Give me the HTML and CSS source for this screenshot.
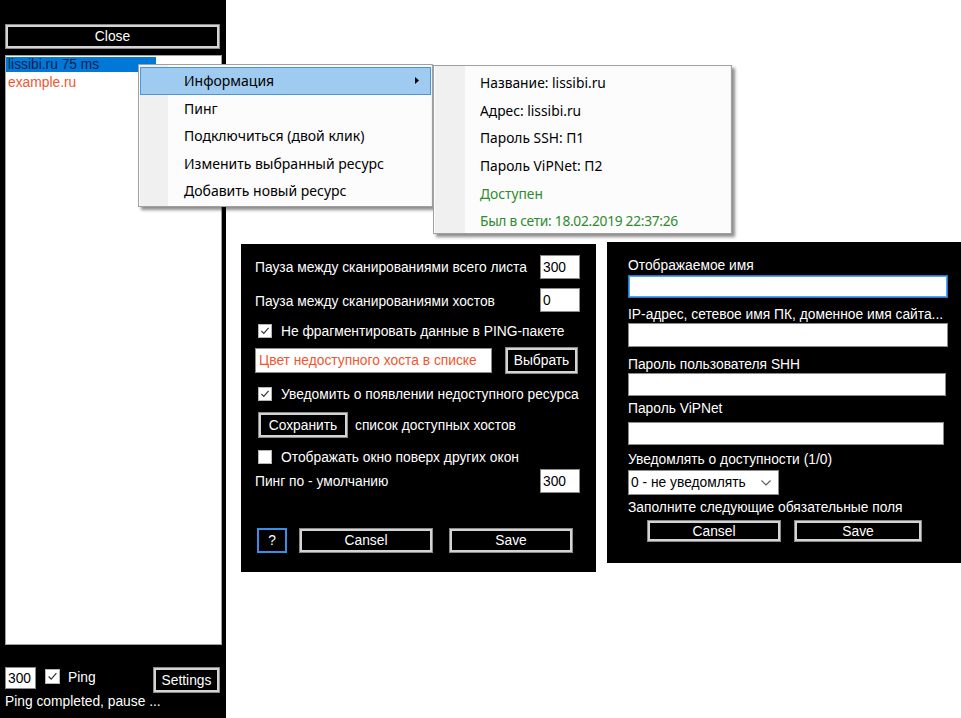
FILE: index.html
```html
<!DOCTYPE html>
<html lang="ru">
<head>
<meta charset="utf-8">
<title>Ping monitor</title>
<link rel="stylesheet" href="styles.css">
</head>
<body>
<aside class="win main-win">
  <div class="btn btn-close">Close</div>
  <div class="listbox">
    <div class="li"><span class="li-hl">lissibi.ru 75 ms</span></div>
    <div class="li li-down">example.ru</div>
  </div>
  <div class="main-bottom">
    <div class="field field-num">300</div>
    <span class="check checked"><svg viewBox="0 0 15 15"><polyline points="3,7.5 6,10.5 12,3.5"/></svg></span>
    <span class="ping-label">Ping</span>
    <div class="btn btn-settings">Settings</div>
  </div>
  <div class="status">Ping completed, pause ...</div>
</aside>

<section class="win settings">
  <div class="srow srow-1">
    <span>Пауза между сканированиями всего листа</span>
    <div class="field field-small">300</div>
  </div>
  <div class="srow srow-2">
    <span class="lbl-low">Пауза между сканированиями хостов</span>
    <div class="field field-small">0</div>
  </div>
  <div class="srow srow-3 srow-check">
    <span class="check checked"><svg viewBox="0 0 15 15"><polyline points="3,7.5 6,10.5 12,3.5"/></svg></span>
    <span>Не фрагментировать данные в PING-пакете</span>
  </div>
  <div class="srow srow-4">
    <div class="field field-color">Цвет недоступного хоста в списке</div>
    <div class="btn btn-pick">Выбрать</div>
  </div>
  <div class="srow srow-5 srow-check">
    <span class="check checked"><svg viewBox="0 0 15 15"><polyline points="3,7.5 6,10.5 12,3.5"/></svg></span>
    <span>Уведомить о появлении недоступного ресурса</span>
  </div>
  <div class="srow srow-6 srow-save">
    <div class="btn btn-save-list">Сохранить</div>
    <span>список доступных хостов</span>
  </div>
  <div class="srow srow-7 srow-check">
    <span class="check"></span>
    <span>Отображать окно поверх других окон</span>
  </div>
  <div class="srow srow-8">
    <span>Пинг по - умолчанию</span>
    <div class="field field-small">300</div>
  </div>
  <div class="srow srow-9">
    <div class="btn btn-help">?</div>
    <div class="btn btn-cancel">Cansel</div>
    <div class="btn btn-ok">Save</div>
  </div>
</section>

<section class="win form">
  <div class="flabel">Отображаемое имя</div>
  <div class="finput finput-focus f1"></div>
  <div class="flabel fl2">IP-адрес, сетевое имя ПК, доменное имя сайта...</div>
  <div class="finput f2"></div>
  <div class="flabel fl3">Пароль пользователя SHH</div>
  <div class="finput f3"></div>
  <div class="flabel fl4">Пароль ViPNet</div>
  <div class="finput f4"></div>
  <div class="flabel fl5">Уведомлять о доступности (1/0)</div>
  <div class="select">
    <span>0 - не уведомлять</span>
    <svg class="chev" viewBox="0 0 10 6"><polyline points="0.5,0.5 5,5 9.5,0.5"/></svg>
  </div>
  <div class="flabel fl6">Заполните следующие обязательные поля</div>
  <div class="form-buttons">
    <div class="btn btn-f-cancel">Cansel</div>
    <div class="btn btn-f-save">Save</div>
  </div>
</section>

<nav class="menu ctx">
  <div class="mi mi-active">Информация<svg class="arrow" viewBox="0 0 4 7"><polygon points="0,0 4,3.5 0,7"/></svg></div>
  <div class="mi">Пинг</div>
  <div class="mi">Подключиться (двой клик)</div>
  <div class="mi">Изменить выбранный ресурс</div>
  <div class="mi">Добавить новый ресурс</div>
</nav>

<nav class="menu sub">
  <div class="mi">Название: lissibi.ru</div>
  <div class="mi">Адрес: lissibi.ru</div>
  <div class="mi">Пароль SSH: П1</div>
  <div class="mi">Пароль ViPNet: П2</div>
  <div class="mi mi-ok">Доступен</div>
  <div class="mi mi-ok">Был в сети: 18.02.2019 22:37:26</div>
</nav>
</body>
</html>
```

FILE: styles.css
```css
* { box-sizing: border-box; }
html, body { margin: 0; padding: 0; }
body {
  width: 961px;
  height: 718px;
  background: #fff;
  overflow: hidden;
  position: relative;
  font-family: "Liberation Sans", Arial, sans-serif;
  font-size: 13.8px;
  color: #fff;
}

.win { position: absolute; background: #000; }

/* generic controls */
.btn {
  background: #000;
  color: #fff;
  border: 1px solid #8a8a8a;
  box-shadow: inset 0 0 0 2px #d4d4d4;
  display: flex;
  align-items: center;
  justify-content: center;
  flex: none;
}
.field {
  background: #fff;
  color: #000;
  border: 1px solid #8c8c8c;
  display: flex;
  align-items: center;
  padding-left: 2px;
  flex: none;
}
.check {
  width: 14px;
  height: 14px;
  background: #fff;
  border: 1px solid #b5b5b5;
  display: inline-flex;
  flex: none;
}
.check svg { width: 100%; height: 100%; }
.check polyline { fill: none; stroke: #333; stroke-width: 1.4; }

/* main window */
.main-win {
  left: 0; top: 0;
  width: 226px; height: 718px;
  display: flex;
  flex-direction: column;
  padding: 24px 6px 0 5px;
}
.btn-close { width: 215px; height: 25px; }
.listbox {
  margin-top: 6px;
  width: 217px;
  height: 590px;
  background: #fff;
  border: 1px solid #a0a0a0;
  padding-top: 1px;
  flex: none;
}
.li { height: 18px; line-height: 15px; padding-left: 0; }
.li-hl {
  display: inline-block;
  width: 150px;
  height: 15px;
  background: #0078d7;
  color: #0a1f4d;
  padding-left: 2px;
}
.li-down { color: #f2552e; padding-left: 2px; }
.main-bottom {
  margin-top: 22px;
  height: 26px;
  display: flex;
  align-items: flex-start;
}
.field-num { width: 31px; height: 22px; }
.main-bottom .check { margin: 2px 0 0 9px; width: 15px; height: 15px; }
.ping-label { margin: 3px 0 0 8px; line-height: 15px; }
.btn-settings { margin-left: auto; width: 67px; height: 26px; }
.status { margin-top: 1px; line-height: 16px; }

/* settings dialog */
.settings {
  left: 241px; top: 244px;
  width: 355px; height: 328px;
  padding: 11px 16px 0 14px;
  display: flex;
  flex-direction: column;
}
.srow { display: flex; align-items: center; justify-content: space-between; flex: none; white-space: nowrap; }
.srow-check, .srow-save, .srow-4 { justify-content: flex-start; }
.srow-check { padding-left: 3px; gap: 9px; }
.srow-1 { height: 24px; }
.srow-2 { height: 24px; margin-top: 9px; }
.lbl-low { padding-top: 3px; }
.srow-3 { height: 18px; margin-top: 10px; }
.srow-4 { height: 27px; margin-top: 7px; gap: 13px; }
.srow-5 { height: 20px; margin-top: 10px; }
.srow-6 { height: 28px; margin-top: 7px; padding-left: 3px; gap: 7px; }
.srow-7 { height: 20px; margin-top: 8px; }
.srow-8 { height: 24px; margin-top: 2px; }
.srow-9 { height: 25px; margin-top: 35px; justify-content: flex-start; padding-left: 2px; }
.field-small { width: 40px; height: 24px; }
.field-color { width: 237px; height: 25px; color: #f2552e; padding-left: 3px; }
.btn-pick { width: 73px; height: 27px; }
.btn-save-list { width: 90px; height: 26px; }
.btn-help {
  width: 30px; height: 25px;
  border: 2px solid #3a8ee6;
  box-shadow: none;
}
.btn-cancel { width: 134px; height: 25px; margin-left: 12px; }
.btn-ok { width: 124px; height: 25px; margin-left: 16px; }

/* resource form */
.form {
  left: 607px; top: 242px;
  width: 354px; height: 321px;
  padding: 15px 0 0 21px;
  display: flex;
  flex-direction: column;
  align-items: flex-start;
}
.flabel { height: 17px; line-height: 17px; white-space: nowrap; flex: none; }
.finput {
  background: #fff;
  border: 1px solid #8c8c8c;
  width: 320px;
  height: 23px;
  margin-top: 1px;
  flex: none;
}
.finput-focus { border-color: #1a7bd6; box-shadow: inset 0 0 0 1px #5aa3e6; }
.fl2 { margin-top: 8px; }
.f2 { height: 24px; margin-top: 0; }
.fl3 { margin-top: 9px; }
.f3 { width: 318px; margin-top: 0; }
.fl4 { margin-top: 4px; }
.f4 { width: 316px; margin-top: 5px; }
.fl5 { margin-top: 6px; }
.select {
  margin-top: 2px;
  width: 151px;
  height: 25px;
  background: #fff;
  border: 1px solid #8c8c8c;
  color: #000;
  display: flex;
  align-items: center;
  justify-content: space-between;
  padding: 0 7px 0 2px;
  flex: none;
}
.chev { width: 10px; height: 6px; }
.chev polyline { fill: none; stroke: #555; stroke-width: 1.1; }
.fl6 { margin-top: 4px; }
.form-buttons { margin-top: 4px; margin-left: 19px; display: flex; gap: 13px; }
.btn-f-cancel { width: 134px; height: 22px; }
.btn-f-save { width: 128px; height: 22px; }

/* menus */
.menu {
  position: absolute;
  background: #fff linear-gradient(to right, #f0f0f0 0, #f0f0f0 28px, #fcfcfc 28px);
  background-origin: content-box;
  border: 1px solid #a0a0a0;
  box-shadow: 3px 3px 3px rgba(0, 0, 0, 0.45);
  padding: 2px 1px;
  font-family: "Noto Sans", "Open Sans", sans-serif;
  font-size: 14px;
  color: #000;
}
.ctx { left: 138px; top: 64px; width: 295px; height: 143px; }
.sub {
  left: 433px; top: 65px; width: 299px; height: 169px;
  padding: 3px 1px;
  background: #fff linear-gradient(to right, #f0f0f0 0, #f0f0f0 30px, #fcfcfc 30px);
  background-origin: content-box;
  font-size: 13.8px;
}
.mi {
  height: 27.5px;
  display: flex;
  align-items: center;
  padding-left: 44px;
  position: relative;
  white-space: nowrap;
}
.sub .mi { height: 27.6px; padding-left: 45px; }
.mi-active {
  background: #9fcbf1;
  outline: 1px solid #4a94d8;
  outline-offset: -1px;
}
.arrow { position: absolute; left: 275px; top: 10px; width: 4px; height: 7px; fill: #000; }
.mi-ok { color: #2e8b2e; }
.sub .mi-ok:last-child { letter-spacing: -0.3px; }
```
